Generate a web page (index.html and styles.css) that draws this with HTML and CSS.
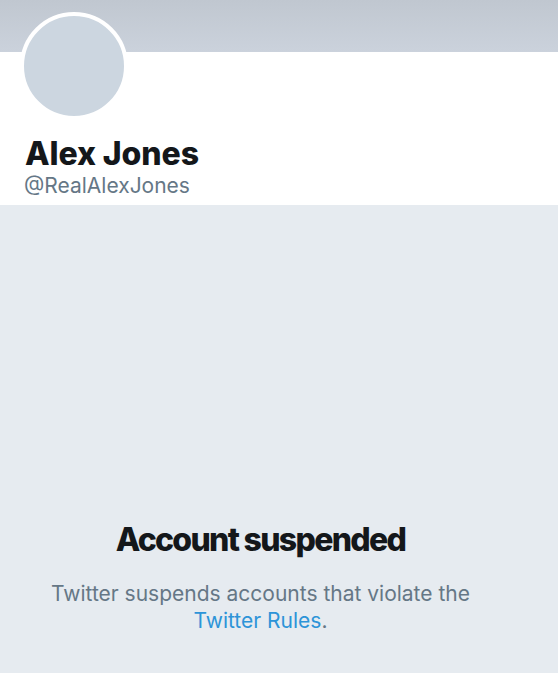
FILE: index.html
```html
<!DOCTYPE html>
<html>
<head>
<meta charset="utf-8">
<link rel="stylesheet" href="styles.css">
</head>
<body>
<div class="banner"></div>
<section class="profile">
  <div class="avatar"></div>
  <h1 class="name">Alex Jones</h1>
  <div class="handle">@RealAlexJones</div>
</section>
<main class="notice">
  <h2 class="title">Account suspended</h2>
  <p class="desc">Twitter suspends accounts that violate the<br><a class="link" href="#">Twitter Rules</a>.</p>
</main>
</body>
</html>
```
FILE: styles.css
```css
html, body {
  margin: 0;
  padding: 0;
  height: 100%;
}
body {
  font-family: Inter, "Liberation Sans", sans-serif;
  background: #e6ebf0;
  display: flex;
  flex-direction: column;
}
.banner {
  height: 52px;
  background: linear-gradient(180deg, #c0c7d0 0%, #cbd2dc 100%);
  flex: none;
}
.profile {
  background: #ffffff;
  padding: 0 24px 6px 20px;
  flex: none;
}
.avatar {
  width: 100px;
  height: 100px;
  border: 4px solid #ffffff;
  border-radius: 50%;
  background: #ccd6e0;
  margin-top: -40px;
}
.name {
  margin: 15px 0 0 5px;
  font-size: 32px;
  line-height: 38px;
  font-weight: 800;
  color: #14171a;
  letter-spacing: -0.1px;
}
.handle {
  margin: 0 0 0 4px;
  font-size: 21px;
  line-height: 26px;
  color: #657786;
}
.notice {
  flex: 1;
  padding: 315px 37px 0 0;
  text-align: center;
}
.title {
  margin: 0;
  font-size: 32px;
  line-height: 40px;
  font-weight: 800;
  color: #14171a;
  letter-spacing: -1.7px;
}
.desc {
  margin: 20px 0 0;
  font-size: 21px;
  line-height: 27px;
  color: #657786;
}
.link {
  color: #2d94d8;
  text-decoration: none;
}
```
